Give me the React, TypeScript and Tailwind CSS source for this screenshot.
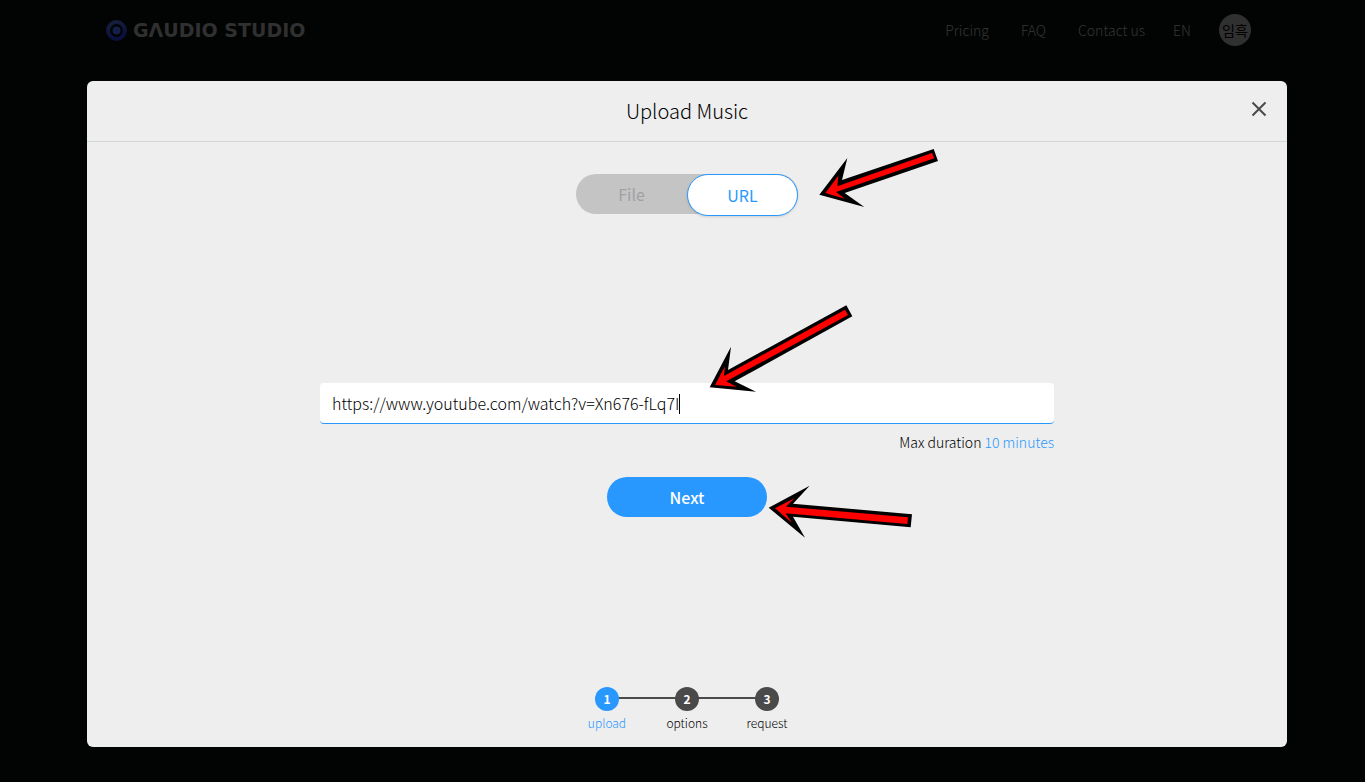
import { useState } from "react";
import clsx from "clsx";

const NAV_LINKS = [
  { label: "Pricing", href: "#pricing", className: "mr-8" },
  { label: "FAQ", href: "#faq", className: "mr-8" },
  { label: "Contact us", href: "#contact", className: "mr-7" },
  { label: "EN", href: "#lang", className: "mr-7" },
];

const STEPS = ["upload", "options", "request"];

function Logo() {
  return (
    <a href="#home" className="flex items-center gap-1.5 text-[#303030]">
      <svg width="21" height="21" viewBox="0 0 21 21" aria-hidden="true">
        <defs>
          <linearGradient id="ring" x1="0" y1="0" x2="0.4" y2="1">
            <stop offset="0" stopColor="#15213a" />
            <stop offset="1" stopColor="#0b1040" />
          </linearGradient>
        </defs>
        <circle cx="10.5" cy="10.5" r="8.4" fill="none" stroke="url(#ring)" strokeWidth="4" />
        <circle cx="10.5" cy="10.5" r="4" fill="#161f4c" />
      </svg>
      <span className="font-['DejaVu_Sans',sans-serif] text-[19px] leading-5 font-bold">GΛUDIO STUDIO</span>
    </a>
  );
}

type ArrowProps = {
  width: number;
  height: number;
  viewBox: string;
  outline: string;
  fill: string;
  className: string;
};

function Arrow({ width, height, viewBox, outline, fill, className }: ArrowProps) {
  return (
    <svg
      width={width}
      height={height}
      viewBox={viewBox}
      aria-hidden="true"
      className={clsx("pointer-events-none absolute max-w-none", className)}
    >
      <polygon points={outline} fill="#000" />
      <polygon points={fill} fill="#f00" />
    </svg>
  );
}

function SourceToggle({ source, onChange }: { source: string; onChange: (s: string) => void }) {
  return (
    <div className="relative h-[42px] w-[222px]">
      <div className="flex h-10 rounded-full bg-[#c4c4c4]">
        {["File", "URL"].map((name) => (
          <button
            key={name}
            type="button"
            onClick={() => onChange(name)}
            className={clsx(
              "w-1/2 rounded-full text-base",
              source === name
                ? "h-[42px] border border-[#2898ff] bg-white text-[#2898ff] shadow-sm"
                : "h-10 text-[#a0a0a5]"
            )}
          >
            {name}
          </button>
        ))}
      </div>
      <Arrow
        width={120}
        height={60}
        viewBox="779 174 360 180"
        outline="780,314 864,204 848,270 1123,177 1136,213 856,309 915,351"
        fill="798,309 837,257 834,289 1118,189 1125,205 830,306 857,326"
        className="-top-[26px] left-[243px]"
      />
    </div>
  );
}

function Stepper({ current }: { current: number }) {
  return (
    <ol className="flex">
      {STEPS.map((step, i) => (
        <li key={step} className="relative flex w-20 flex-col items-center">
          {i > 0 && <span className="absolute top-[10px] right-1/2 h-[2px] w-20 bg-[#4a4a4a]" />}
          <span
            className={clsx(
              "relative z-20 flex size-6 items-center justify-center rounded-full text-xs font-bold text-white",
              i === current ? "bg-[#2898ff]" : "bg-[#4a4a4a]"
            )}
          >
            {i + 1}
          </span>
          <span
            className={clsx("mt-1 text-xs leading-4 font-light", i === current ? "text-[#2898ff]" : "text-black")}
          >
            {step}
          </span>
        </li>
      ))}
    </ol>
  );
}

export default function App() {
  const [source, setSource] = useState("URL");
  const [url, setUrl] = useState("https://www.youtube.com/watch?v=Xn676-fLq7I");

  return (
    <div className="flex min-h-screen flex-col bg-[#020303] font-['Noto_Sans_CJK_KR',sans-serif]">
      <header className="h-[81px] w-full pr-2">
        <div className="mx-auto flex h-[60px] max-w-[1145px] items-center justify-between">
          <Logo />
          <nav className="flex items-center text-sm font-light text-[#363636]">
            {NAV_LINKS.map((link) => (
              <a key={link.label} href={link.href} className={link.className}>
                {link.label}
              </a>
            ))}
            <button
              type="button"
              className="flex size-8 items-center justify-center rounded-full bg-[#303030] text-sm font-normal text-black"
            >
              임흑
            </button>
          </nav>
        </div>
      </header>

      <main className="flex flex-1 flex-col pb-[35px] pl-[9px]">
        <section
          role="dialog"
          aria-labelledby="upload-title"
          className="mx-auto flex w-full max-w-[1200px] flex-1 flex-col rounded-md bg-[#eee]"
        >
          <div className="relative flex h-[61px] items-center justify-center border-b border-[#d5d5dc]">
            <h1 id="upload-title" className="text-xl font-light text-black">
              Upload Music
            </h1>
            <button type="button" aria-label="Close" className="absolute top-5 right-5 text-[#4a4a4a]">
              <svg width="16" height="16" viewBox="0 0 16 16" fill="none" stroke="currentColor" strokeWidth="2">
                <path d="M1.5 1.5l13 13M14.5 1.5l-13 13" />
              </svg>
            </button>
          </div>

          <div className="flex flex-1 flex-col items-center pt-8 pb-4">
            <SourceToggle source={source} onChange={setSource} />

            <form
              onSubmit={(e) => e.preventDefault()}
              className="my-auto flex w-full max-w-[734px] flex-col items-center pb-[3px]"
            >
              <div className="relative w-full">
                <input
                  type="text"
                  aria-label="Music URL"
                  value={url}
                  onChange={(e) => setUrl(e.target.value)}
                  className="block h-[41px] w-full rounded-sm border-b border-[#2898ff] bg-white px-3 text-base font-light text-black caret-transparent outline-none"
                />
                <div aria-hidden="true" className="pointer-events-none absolute inset-y-0 left-3 flex items-center">
                  <span className="invisible text-base font-light">{url}</span>
                  <span className="h-5 w-px bg-black" />
                </div>
                <Arrow
                  width={145}
                  height={89}
                  viewBox="56 40 435 267"
                  outline="58,290 122,168 113,238 468,44 486,77 133,272 197,303"
                  fill="74,283 104,227 101,256 464,57 473,73 108,272 138,288"
                  className="-top-[79px] left-[389px]"
                />
              </div>
              <p className="mt-2 self-end text-sm leading-[21px] font-light text-black">
                Max duration <span className="text-[#2898ff]">10 minutes</span>
              </p>
              <div className="relative mt-6">
                <button type="submit" className="h-10 w-40 rounded-full bg-[#2898ff] text-base font-medium text-white">
                  Next
                </button>
                <Arrow
                  width={145}
                  height={53}
                  viewBox="535 179 435 159"
                  outline="537,247 660,181 610,235 967,267 963,306 610,274 646,337"
                  fill="556,249 614,219 589,244 955,276 953,296 588,264 607,293"
                  className="top-2 left-[161px]"
                />
              </div>
            </form>

            <Stepper current={0} />
          </div>
        </section>
      </main>
    </div>
  );
}
